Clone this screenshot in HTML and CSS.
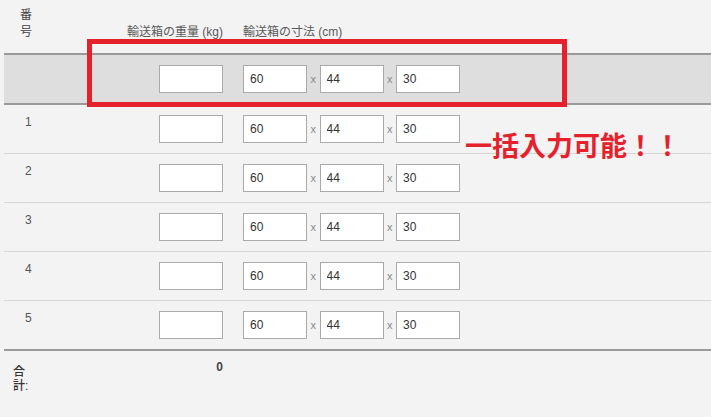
FILE: index.html
```html
<!DOCTYPE html>
<html lang="ja">
<head>
<meta charset="utf-8">
<link rel="stylesheet" href="styles.css">
</head>
<body>
<div class="page">
  <table class="boxes">
    <colgroup>
      <col class="c-no">
      <col class="c-weight">
      <col class="c-dim">
    </colgroup>
    <thead>
      <tr>
        <th class="h-no">番号</th>
        <th class="h-weight">輸送箱の重量 (kg)</th>
        <th class="h-dim">輸送箱の寸法 (cm)</th>
      </tr>
    </thead>
    <tbody>
      <tr class="bulk">
        <td class="no"></td>
        <td class="weight"><div class="wrap-r"><input class="box" type="text" value=""></div></td>
        <td class="dim"><div class="dims"><input class="box" type="text" value="60"><span class="x">x</span><input class="box" type="text" value="44"><span class="x">x</span><input class="box" type="text" value="30"></div></td>
      </tr>
      <tr>
        <td class="no">1</td>
        <td class="weight"><div class="wrap-r"><input class="box" type="text" value=""></div></td>
        <td class="dim"><div class="dims"><input class="box" type="text" value="60"><span class="x">x</span><input class="box" type="text" value="44"><span class="x">x</span><input class="box" type="text" value="30"></div></td>
      </tr>
      <tr>
        <td class="no">2</td>
        <td class="weight"><div class="wrap-r"><input class="box" type="text" value=""></div></td>
        <td class="dim"><div class="dims"><input class="box" type="text" value="60"><span class="x">x</span><input class="box" type="text" value="44"><span class="x">x</span><input class="box" type="text" value="30"></div></td>
      </tr>
      <tr>
        <td class="no">3</td>
        <td class="weight"><div class="wrap-r"><input class="box" type="text" value=""></div></td>
        <td class="dim"><div class="dims"><input class="box" type="text" value="60"><span class="x">x</span><input class="box" type="text" value="44"><span class="x">x</span><input class="box" type="text" value="30"></div></td>
      </tr>
      <tr>
        <td class="no">4</td>
        <td class="weight"><div class="wrap-r"><input class="box" type="text" value=""></div></td>
        <td class="dim"><div class="dims"><input class="box" type="text" value="60"><span class="x">x</span><input class="box" type="text" value="44"><span class="x">x</span><input class="box" type="text" value="30"></div></td>
      </tr>
      <tr class="last">
        <td class="no">5</td>
        <td class="weight"><div class="wrap-r"><input class="box" type="text" value=""></div></td>
        <td class="dim"><div class="dims"><input class="box" type="text" value="60"><span class="x">x</span><input class="box" type="text" value="44"><span class="x">x</span><input class="box" type="text" value="30"></div></td>
      </tr>
    </tbody>
    <tfoot>
      <tr>
        <td class="f-label">合計:</td>
        <td class="f-total">0</td>
        <td class="f-rest"></td>
      </tr>
    </tfoot>
  </table>
  <div class="highlight"></div>
  <div class="note">一括入力可能！！</div>
</div>
</body>
</html>
```

FILE: styles.css
```css
html, body {
  margin: 0;
  padding: 0;
  background: #f3f3f3;
}
body {
  font-family: "Liberation Sans", "Noto Sans CJK JP", sans-serif;
  font-size: 12px;
  color: #555;
}
.page {
  position: relative;
  width: 711px;
  height: 417px;
  overflow: hidden;
}
.boxes {
  margin-left: 4px;
  width: 707px;
  border-collapse: collapse;
  table-layout: fixed;
}
.c-no { width: 36px; }
.c-weight { width: 193px; }
.boxes th {
  font-weight: normal;
  color: #5a5a5a;
  line-height: 17px;
  vertical-align: bottom;
  padding: 7px 0 12px 0;
  border-bottom: 2px solid #9a9a9a;
}
.h-no {
  text-align: left;
  padding-left: 16px !important;
  padding-right: 8px !important;
  color: #444 !important;
}
.h-weight {
  text-align: right;
  padding-right: 10px !important;
  white-space: nowrap;
}
.h-dim {
  text-align: left;
  padding-left: 10px !important;
  white-space: nowrap;
}
.boxes td {
  vertical-align: top;
  padding: 10px 0;
}
.boxes tbody tr {
  border-bottom: 1px solid #d6d6d6;
}
.boxes tbody tr.bulk {
  background: #dedede;
  border-bottom: 2px solid #9a9a9a;
}
.boxes tbody tr.last {
  border-bottom: 2px solid #9a9a9a;
}
.boxes td.no {
  padding: 9px 0 0 21px;
  line-height: 17px;
  color: #555;
}
.boxes td.weight {
  padding-right: 10px;
}
.boxes td.dim {
  padding-left: 10px;
}
.wrap-r {
  display: flex;
  justify-content: flex-end;
}
.dims {
  display: flex;
  align-items: center;
}
.box {
  box-sizing: border-box;
  width: 64px;
  height: 28px;
  margin: 0;
  border: 1px solid #aaa;
  background: #fff;
  padding: 0 0 0 6px;
  font-family: "Liberation Sans", sans-serif;
  font-size: 12px;
  color: #333;
  outline: none;
}
.x {
  width: 12.5px;
  text-align: center;
  font-size: 11px;
  color: #888;
  line-height: 28px;
}
.boxes td.f-label {
  padding: 14px 15px 0 9px;
  font-weight: 500;
  color: #333;
  line-height: 14px;
}
.boxes td.f-total {
  padding: 9px 10px 0 0;
  text-align: right;
  font-weight: bold;
  color: #444;
  line-height: 14px;
}
.highlight {
  position: absolute;
  left: 87px;
  top: 39px;
  width: 480px;
  height: 68px;
  box-sizing: border-box;
  border: 5px solid #e5222b;
}
.note {
  position: absolute;
  left: 465px;
  top: 131px;
  font-family: "Noto Sans CJK JP", sans-serif;
  font-weight: bold;
  font-size: 27px;
  line-height: 27px;
  color: #e5222b;
  white-space: nowrap;
}
```
